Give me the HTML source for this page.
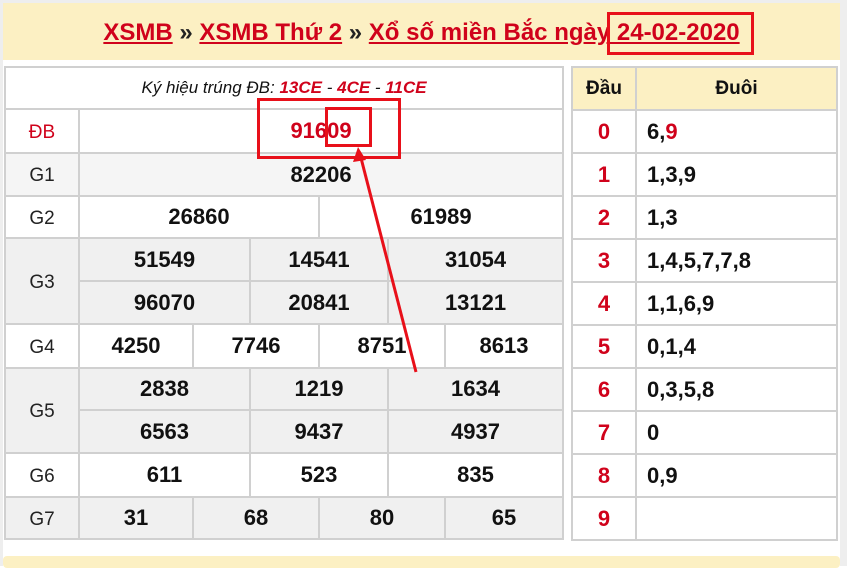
<!DOCTYPE html>
<html><head><meta charset="utf-8"><style>
*{margin:0;padding:0;box-sizing:border-box}
body{width:847px;height:566px;background:#fff;position:relative;overflow:hidden;font-family:"Liberation Sans",Arial,sans-serif}
.frame{position:absolute;left:0;top:0;width:847px;height:566px;border-left:3px solid #eee;border-right:7px solid #eee;border-top:3px solid #eee}
.hdr{position:absolute;left:3px;top:3px;width:837px;height:57px;background:#fcf0c3;text-align:center;font-size:24px;font-weight:bold;line-height:60px;color:#222;white-space:nowrap}
.hdr a{color:#d0021b;text-decoration:underline}
table{border-collapse:collapse;position:absolute;table-layout:fixed}
td{border:2px solid #d0d0d0;text-align:center;font-weight:bold;font-size:22px;color:#111;overflow:hidden;white-space:nowrap}
.g td{background:#f0f0f0}
td.l{font-weight:normal;font-size:19px;color:#222;padding-top:3px}
.r{color:#d0021b}
#L{left:4px;top:66px;width:558px}
#R{left:571px;top:66px;width:267px}
#R td{height:43px}
#R td.d{color:#d0021b}
#R td.t{text-align:left;padding-left:10px}
.box{position:absolute;border:3px solid #e8101a}
.bottom{position:absolute;left:3px;top:556px;width:837px;height:12px;background:#fcf0c3;border-radius:4px}
</style></head><body>
<div class="frame"></div>
<div class="hdr"><a>XSMB</a> » <a>XSMB Thứ 2</a> » <a>Xổ số miền Bắc ngày 24-02-2020</a></div>
<table id="L">
<colgroup><col style="width:74px"><col style="width:114px"><col style="width:57px"><col style="width:69px"><col style="width:69px"><col style="width:57px"><col style="width:118px"></colgroup>
<tr><td colspan="7" style="height:42px;font-weight:normal;font-style:italic;font-size:17px">Ký hiệu trúng ĐB: <b class="r">13CE</b> - <b class="r">4CE</b> - <b class="r">11CE</b></td></tr>
<tr><td class="l r" style="height:44px;color:#d0021b">ĐB</td><td colspan="6" class="r">91609</td></tr>
<tr class="g"><td class="l" style="height:43px;background:#f5f5f5">G1</td><td colspan="6" style="background:#f5f5f5">82206</td></tr>
<tr><td class="l" style="height:42px">G2</td><td colspan="3">26860</td><td colspan="3">61989</td></tr>
<tr class="g"><td class="l" rowspan="2">G3</td><td colspan="2" style="height:43px">51549</td><td colspan="2">14541</td><td colspan="2">31054</td></tr>
<tr class="g"><td colspan="2" style="height:43px">96070</td><td colspan="2">20841</td><td colspan="2">13121</td></tr>
<tr><td class="l" style="height:44px">G4</td><td>4250</td><td colspan="2">7746</td><td colspan="2">8751</td><td>8613</td></tr>
<tr class="g"><td class="l" rowspan="2">G5</td><td colspan="2" style="height:42px">2838</td><td colspan="2">1219</td><td colspan="2">1634</td></tr>
<tr class="g"><td colspan="2" style="height:43px">6563</td><td colspan="2">9437</td><td colspan="2">4937</td></tr>
<tr><td class="l" style="height:44px">G6</td><td colspan="2">611</td><td colspan="2">523</td><td colspan="2">835</td></tr>
<tr class="g"><td class="l" style="height:42px">G7</td><td>31</td><td colspan="2">68</td><td colspan="2">80</td><td>65</td></tr>
</table>
<table id="R">
<colgroup><col style="width:64px"><col></colgroup>
<tr><td style="background:#fcf0c3;height:42px;font-size:19px">Đầu</td><td style="background:#fcf0c3;font-size:19px">Đuôi</td></tr>
<tr><td class="d">0</td><td class="t">6,<span class="r">9</span></td></tr>
<tr><td class="d">1</td><td class="t">1,3,9</td></tr>
<tr><td class="d">2</td><td class="t">1,3</td></tr>
<tr><td class="d">3</td><td class="t">1,4,5,7,7,8</td></tr>
<tr><td class="d">4</td><td class="t">1,1,6,9</td></tr>
<tr><td class="d">5</td><td class="t">0,1,4</td></tr>
<tr><td class="d">6</td><td class="t">0,3,5,8</td></tr>
<tr><td class="d">7</td><td class="t">0</td></tr>
<tr><td class="d">8</td><td class="t">0,9</td></tr>
<tr><td class="d">9</td><td class="t"></td></tr>
</table>
<div class="box" style="left:607px;top:12px;width:147px;height:43px"></div>
<div class="box" style="left:257px;top:98px;width:144px;height:61px"></div>
<div class="box" style="left:325px;top:107px;width:47px;height:40px"></div>
<svg style="position:absolute;left:0;top:0" width="847" height="566"><line x1="416" y1="372" x2="361" y2="158" stroke="#e8101a" stroke-width="3"/><polygon points="358,147 353,162 366,160" fill="#e8101a"/></svg>
<div class="bottom"></div>
</body></html>
